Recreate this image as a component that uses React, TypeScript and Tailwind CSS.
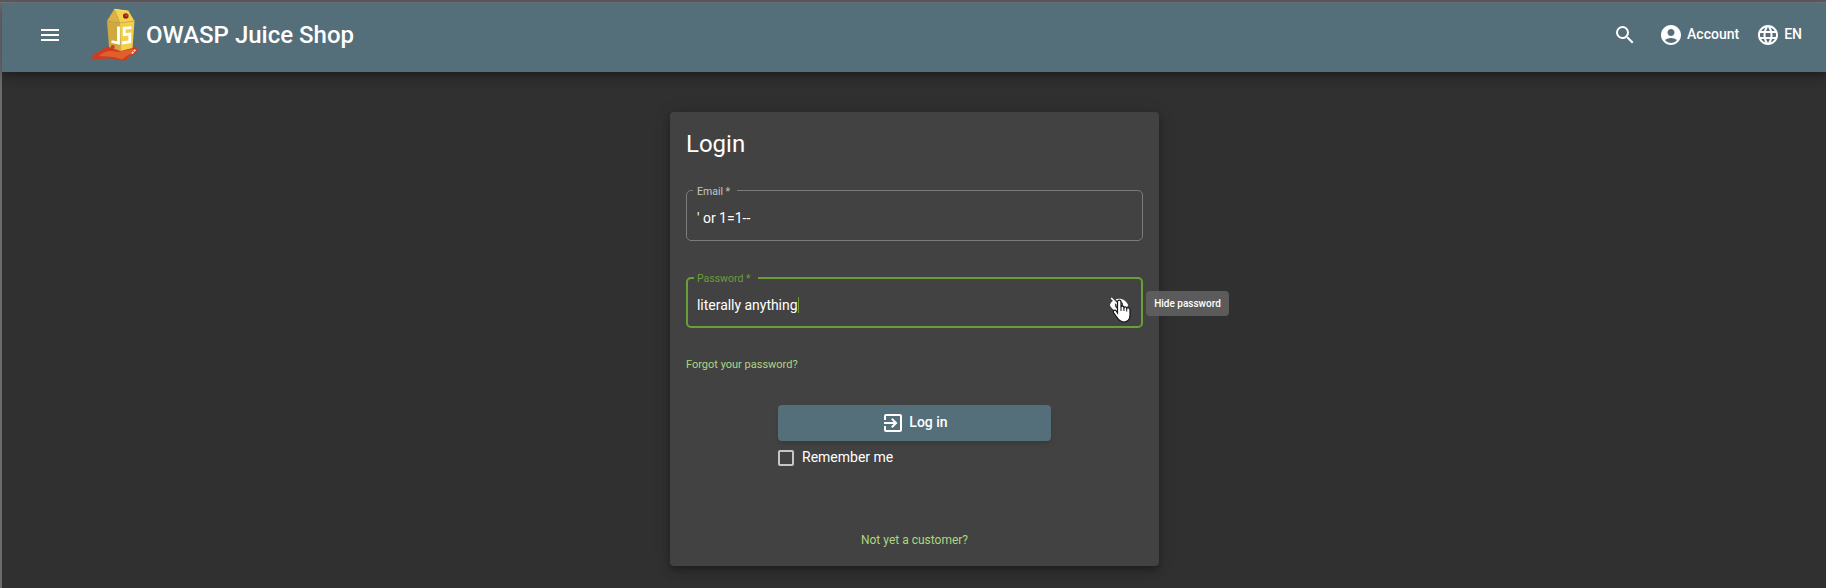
import { MdMenu, MdSearch, MdAccountCircle, MdLanguage, MdExitToApp, MdVisibilityOff } from "react-icons/md";

function Logo() {
  return (
    <svg width="50" height="58" viewBox="0 0 50 58" className="shrink-0">
      <path d="M2 51 C6 46 9 46 13 43 C17 39.500 20 40 24 42 L41 41 C45 39.500 48.500 41 47.500 44 C46.500 49 40 49 37 53 C35 55.500 31 54.500 27 53.500 C19 51 12 54 5 53 C2.500 52.800 1 52.500 2 51Z" fill="#cf3c22" />
      <path d="M9 50 C14 45 21 44 28 46 L42 43 C46 43 45.500 46.500 42 47.500 C37 49 35 51 32 53.500 C24 50 16 51 9 50Z" fill="#e0602c" />
      <path d="M17 15 L30 17 L30.500 45 L19 41Z" fill="#cfa840" />
      <path d="M24.300 3 L38.500 5 L44.500 15 L30 17Z" fill="#f5d24b" />
      <path d="M17 15 L24.300 3 L30 17Z" fill="#dab142" />
      <path d="M30 17 L44.500 15 L42.500 42 L30.500 45Z" fill="#f3cf48" />
      <path d="M24.300 3.300 L38.500 5.200" stroke="#fbe27a" strokeWidth="1" />
      <path d="M30 17 L44.500 15" stroke="#cfa840" strokeWidth="0.800" />
      <circle cx="35.800" cy="10" r="2.800" fill="#8f2216" />
      <circle cx="36.500" cy="9.500" r="1.200" fill="#d0452c" />
      <path d="M28.500 20.500 V37 L21.500 35.500" fill="none" stroke="#fff" strokeWidth="2.800" />
      <path d="M41.500 21.700 L34.200 22.300 V28.700 L39.800 28 V35.700 L32 37" fill="none" stroke="#fff" strokeWidth="2.800" />
      <circle cx="22.800" cy="41" r="2" fill="#cf3c22" />
      <path d="M42 47.500 L46 43" stroke="#ffe8dc" strokeWidth="1.800" strokeDasharray="2 1" />
    </svg>
  );
}

function HandCursor() {
  return (
    <svg width="19" height="24" viewBox="0 0 19 24" className="absolute left-[3px] top-[4px]">
      <path d="M5.500 14 V3 C5.500 .5 9 .5 9 3 V8 C9.500 6.500 11.800 6.800 12 8.500 C12.500 7.300 14.500 7.700 14.700 9.300 C15.500 8.300 18 9 18 11 V16 C18 20 15.500 23 11.500 23 C7.500 23 6 20 4 17 L1.500 13.500 C.5 11.500 3 10.500 4.200 12Z" fill="#fff" stroke="#14141f" strokeWidth="1.200" />
      <path d="M9 8 V12 M12 8.500 V12 M14.700 9.500 V12.500" stroke="#14141f" strokeWidth="1" />
    </svg>
  );
}

export default function App() {
  return (
    <div className="flex h-[588px] w-full flex-col overflow-hidden border-t-2 border-[#56565b] bg-[#303030] font-['Roboto','Liberation_Sans',sans-serif] text-white">
      <div className="flex grow flex-col border-l-2 border-t border-l-[#6b6b6e] border-t-[#77777b]">
        <header className="relative z-10 flex h-[69px] shrink-0 items-center bg-[#546e7a] pb-[5px] pl-9 pr-6 shadow-[0_3px_5px_-1px_rgba(0,0,0,0.2),0_6px_10px_0_rgba(0,0,0,0.14),0_1px_18px_0_rgba(0,0,0,0.12)]">
          <MdMenu size={24} />
          <div className="ml-[28px]"><Logo /></div>
          <h1 className="ml-[6px] text-[24px] font-medium leading-8">OWASP Juice Shop</h1>
          <div className="ml-auto flex items-center text-[14px] font-medium">
            <MdSearch size={24} />
            <MdAccountCircle size={24} className="ml-[22px]" />
            <span className="mb-0.5 ml-1">Account</span>
            <MdLanguage size={24} className="ml-[17px]" />
            <span className="mb-0.5 ml-1">EN</span>
          </div>
        </header>
        <main className="flex justify-center pl-px pt-10">
          <section className="flex h-[454px] w-[489px] flex-col rounded bg-[#424242] px-4 shadow-[0_3px_5px_-1px_rgba(0,0,0,0.2),0_6px_10px_0_rgba(0,0,0,0.14),0_1px_18px_0_rgba(0,0,0,0.12)]">
            <h2 className="mt-4 text-[24px] leading-8">Login</h2>
            <div className="relative mt-[30px] flex h-[51px] shrink-0 items-center rounded-[5px] border border-[#7c7c7c] pl-[10px] pt-[5px]">
              <span className="absolute left-[6px] top-[-5px] w-[44px] bg-[#424242] pl-1 text-[10.500px] leading-3 text-[#c6c6c6]">Email *</span>
              <span className="text-[14px] leading-4">' or 1=1--</span>
            </div>
            <div className="relative mt-[36px] flex h-[51px] shrink-0 items-center rounded-[5px] border-2 border-[#689f38] pl-[9px] pt-[5px]">
              <span className="absolute left-[6px] top-[-6px] w-[64px] bg-[#424242] pl-[3px] text-[10.500px] leading-3 text-[#689f38]">Password *</span>
              <span className="-mr-px border-r border-[#689f38] text-[14px] leading-4 tracking-[-0.03px]">literally anything</span>
              <div className="relative ml-auto mr-[12px] h-5 w-5">
                <MdVisibilityOff size={20} />
                <HandCursor />
              </div>
              <div className="absolute left-[458px] top-[12px] flex h-[25px] w-[83px] items-center justify-center rounded bg-[#616161]/90 text-[10px] font-medium">Hide password</div>
            </div>
            <a className="mt-[29px] text-[11px] leading-4 text-[#aed581]">Forgot your password?</a>
            <button className="mt-[32px] flex h-9 w-[273px] shrink-0 items-center justify-center gap-1 self-center rounded bg-[#546e7a] text-[14px] font-medium shadow-md">
              <MdExitToApp size={24} /><span className="mb-0.5">Log in</span>
            </button>
            <label className="ml-[92px] mt-2 flex items-center gap-2 text-[14px] leading-4">
              <span className="h-4 w-4 rounded-[2px] border-2 border-[#c6c6c6]" /><span className="mb-0.5">Remember me</span>
            </label>
            <a className="mb-[18px] mt-auto text-center text-[12px] leading-4 text-[#aed581]">Not yet a customer?</a>
          </section>
        </main>
      </div>
    </div>
  );
}
